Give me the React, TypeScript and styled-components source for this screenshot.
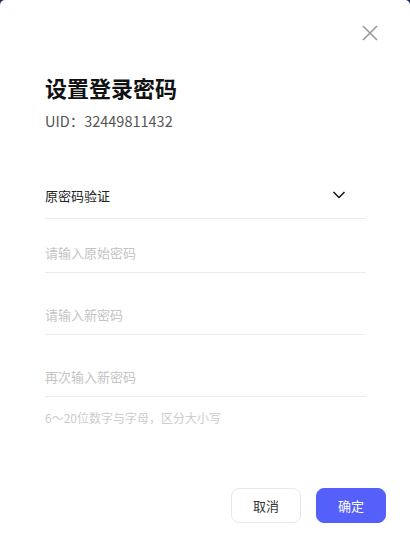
import React from "react";
import styled, { createGlobalStyle } from "styled-components";

const Global = createGlobalStyle`
  html, body { margin: 0; padding: 0; background: #1b2f5e; }
  body { font-family: "Noto Sans CJK SC", "Noto Sans", sans-serif; }
  * { box-sizing: border-box; }
`;

const Modal = styled.div`
  width: 410px;
  height: 546px;
  background: #fff;
  border-radius: 5px 5px 0 0;
  display: flex;
  flex-direction: column;
  padding: 0 44px 0 45px;
`;

const TopBar = styled.div`
  height: 72px;
  display: flex;
  justify-content: flex-end;
  align-items: flex-start;
  padding-top: 23px;
  margin-right: -14px;
`;

const CloseBtn = styled.button`
  width: 20px;
  height: 20px;
  border: none;
  background: none;
  padding: 0;
  cursor: pointer;
  display: flex;
  align-items: center;
  justify-content: center;
`;

const Title = styled.h1`
  margin: 0;
  font-size: 22px;
  font-weight: 700;
  color: #111;
  line-height: 30px;
`;

const Uid = styled.div`
  margin-top: 9px;
  font-size: 14.5px;
  color: #555;
  line-height: 20px;
`;

const Form = styled.div`
  margin-top: 41px;
  display: flex;
  flex-direction: column;
`;

const Field = styled.div<{ $h: number; $pb?: number }>`
  height: ${(p) => p.$h}px;
  display: flex;
  align-items: flex-end;
  justify-content: space-between;
  border-bottom: 1px solid #ececec;
  padding-bottom: ${(p) => p.$pb ?? 10}px;
`;

const SelectText = styled.span`
  font-size: 13px;
  color: #222;
  line-height: 18px;
`;

const Input = styled.input`
  border: none;
  outline: none;
  padding: 0;
  width: 100%;
  font-family: inherit;
  font-size: 13px;
  line-height: 18px;
  color: #222;
  background: transparent;
  &::placeholder { color: #c4c4c4; }
`;

const Hint = styled.div`
  margin-top: 13px;
  font-size: 12px;
  color: #cdcdcd;
  line-height: 16px;
`;

const Footer = styled.div`
  margin-top: auto;
  margin-right: -20px;
  margin-bottom: 23px;
  display: flex;
  justify-content: flex-end;
  gap: 15px;
`;

const Btn = styled.button<{ $primary?: boolean }>`
  width: 70px;
  height: 35px;
  border-radius: 8px;
  font-family: inherit;
  font-size: 13px;
  cursor: pointer;
  border: 1px solid ${(p) => (p.$primary ? "#5560fa" : "#e8e8e8")};
  background: ${(p) => (p.$primary ? "#5560fa" : "#fff")};
  color: ${(p) => (p.$primary ? "#fff" : "#333")};
`;

export default function App() {
  return (
    <>
      <Global />
      <Modal>
        <TopBar>
          <CloseBtn aria-label="close">
            <svg width="16" height="16" viewBox="0 0 16 16">
              <path d="M1 1L15 15M15 1L1 15" stroke="#999" strokeWidth="1.6" fill="none" />
            </svg>
          </CloseBtn>
        </TopBar>
        <Title>设置登录密码</Title>
        <Uid>UID：32449811432</Uid>
        <Form>
          <Field $h={47} $pb={13}>
            <SelectText>原密码验证</SelectText>
            <svg width="14" height="10" viewBox="0 0 14 10" style={{ marginRight: 20, marginBottom: 5 }}>
              <path d="M1.5 2L7 7.5L12.5 2" stroke="#111" strokeWidth="1.5" fill="none" />
            </svg>
          </Field>
          <Field $h={54}>
            <Input placeholder="请输入原始密码" type="password" />
          </Field>
          <Field $h={62}>
            <Input placeholder="请输入新密码" type="password" />
          </Field>
          <Field $h={62}>
            <Input placeholder="再次输入新密码" type="password" />
          </Field>
          <Hint>6～20位数字与字母，区分大小写</Hint>
        </Form>
        <Footer>
          <Btn>取消</Btn>
          <Btn $primary>确定</Btn>
        </Footer>
      </Modal>
    </>
  );
}
